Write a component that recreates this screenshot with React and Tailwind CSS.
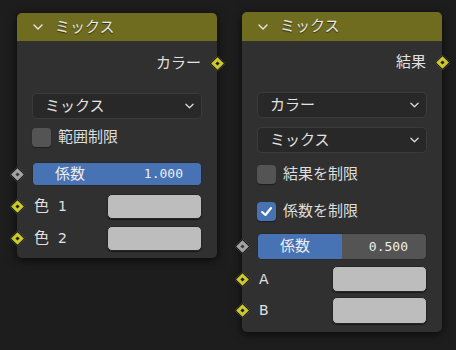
import React from 'react';

const font = { fontFamily: '"DejaVu Sans", "Noto Sans CJK JP", sans-serif' };

// ソケット（ひし形）
const Socket = ({ color = 'yellow', side = 'left' }) => (
  <div
    className={`absolute top-1/2 -translate-y-1/2 ${side === 'left' ? 'left-[-23px]' : 'right-[-23px]'} w-[16px] h-[16px] flex items-center justify-center`}
  >
    <div
      className={`w-[11px] h-[11px] rotate-45 border border-[#151515] flex items-center justify-center ${
        color === 'yellow' ? 'bg-[#cbc92e]' : 'bg-[#a3a3a3]'
      }`}
    >
      <div className={`w-[3px] h-[3px] ${color === 'yellow' ? 'bg-[#1e1e0a]' : 'bg-[#3a3a3a]'}`} />
    </div>
  </div>
);

const Chevron = ({ className }) => (
  <svg viewBox="0 0 10 6" className={className} fill="none" stroke="currentColor" strokeWidth="1.4" strokeLinecap="round" strokeLinejoin="round">
    <path d="M1 1 L5 5 L9 1" />
  </svg>
);

const Header = ({ h }) => (
  <div className={`${h} bg-[#6f6c1f] rounded-t-[5px] flex items-center pl-[16px] text-[#e8e8e8] text-[15px]`}>
    <Chevron className="w-[10px] h-[6px] mr-[12px]" />
    <span className="[text-shadow:0_1px_1px_rgba(0,0,0,0.6)]">ミックス</span>
  </div>
);

const Dropdown = ({ label, className = '' }) => (
  <div className={`h-[26px] rounded-[5px] bg-[#282828] border border-[#3b3b3b] flex items-center justify-between pl-[12px] pr-[7px] text-[#e2e2e2] text-[15px] ${className}`}>
    <span>{label}</span>
    <Chevron className="w-[9px] h-[6px] text-[#dcdcdc]" />
  </div>
);

const Checkbox = ({ label, checked, className = '' }) => (
  <div className={`h-[19px] flex items-center gap-[7px] text-[#dedede] text-[15px] ${className}`}>
    <div
      className={`w-[19px] h-[19px] shrink-0 rounded-[4px] flex items-center justify-center ${
        checked ? 'bg-[#4772b3]' : 'bg-[#545454]'
      } shadow-[0_1px_1px_rgba(0,0,0,0.4)]`}
    >
      {checked && (
        <svg viewBox="0 0 12 12" className="w-[13px] h-[13px]" fill="none" stroke="#ffffff" strokeWidth="2" strokeLinecap="round" strokeLinejoin="round">
          <path d="M2 6.5 L5 9.2 L10.2 2.8" />
        </svg>
      )}
    </div>
    <span>{label}</span>
  </div>
);

const FacSlider = ({ value, className = '' }) => (
  <div className={`relative ${className}`}>
    <Socket color="grey" />
    <div className="relative h-full rounded-[5px] bg-[#545454] overflow-hidden border border-[#2a2a2a]">
      <div className="absolute inset-y-0 left-0 bg-[#4772b3]" style={{ width: `${value * 100}%` }} />
      <div className="relative h-full flex items-center justify-between pl-[22px] pr-[18px] text-[#eeeeee] text-[15px]">
        <span>係数</span>
        <span className="text-[13px]" style={{ fontFamily: '"DejaVu Sans Mono", monospace' }}>{value.toFixed(3)}</span>
      </div>
    </div>
  </div>
);

const ColorRow = ({ label, className = '' }) => (
  <div className={`relative flex items-center justify-between ${className}`}>
    <Socket />
    <span className="pl-[2px] text-[#e0e0e0] text-[14px]">{label}</span>
    <div className="w-[95px] h-full rounded-[5px] bg-[#bdbdbd] border border-[#262626] shadow-[0_1px_1px_rgba(0,0,0,0.5)]" />
  </div>
);

const OutputRow = ({ label, className = '' }) => (
  <div className={`relative h-[22px] flex items-center justify-end pr-[1px] text-[#e0e0e0] text-[15px] ${className}`}>
    <span>{label}</span>
    <Socket side="right" />
  </div>
);

export default function App() {
  return (
    <div className="w-[456px] h-[350px] bg-[#1d1d1d] overflow-hidden flex items-start" style={font}>
      {/* ノード1 */}
      <div className="ml-[17px] mt-[13px] w-[200px] h-[245px] bg-[#303030] rounded-[5px] shadow-[0_2px_10px_rgba(0,0,0,0.7)] flex flex-col">
        <Header h="h-[28px]" />
        <div className="px-[15px] flex flex-col">
          <OutputRow label="カラー" className="mt-[11px]" />
          <Dropdown label="ミックス" className="mt-[19px]" />
          <Checkbox label="範囲制限" className="mt-[9px]" />
          <FacSlider value={1} className="mt-[15px] h-[24px]" />
          <ColorRow label={<><span className="text-[15px]">色</span>&nbsp;&nbsp;1</>} className="mt-[8px] h-[25px]" />
          <ColorRow label={<><span className="text-[15px]">色</span>&nbsp;&nbsp;2</>} className="mt-[7px] h-[25px]" />
        </div>
      </div>

      {/* ノード2 */}
      <div className="ml-[25px] mt-[12px] w-[200px] h-[320px] bg-[#303030] rounded-[5px] shadow-[0_2px_10px_rgba(0,0,0,0.7)] flex flex-col">
        <Header h="h-[29px]" />
        <div className="px-[15px] flex flex-col">
          <OutputRow label="結果" className="mt-[10px]" />
          <Dropdown label="カラー" className="mt-[19px]" />
          <Dropdown label="ミックス" className="mt-[9px]" />
          <Checkbox label="結果を制限" className="mt-[12px]" />
          <Checkbox label="係数を制限" checked className="mt-[18px]" />
          <FacSlider value={0.5} className="mt-[12px] h-[27px]" />
          <ColorRow label="A" className="mt-[6px] h-[26px]" />
          <ColorRow label="B" className="mt-[5px] h-[27px]" />
        </div>
      </div>
    </div>
  );
}
